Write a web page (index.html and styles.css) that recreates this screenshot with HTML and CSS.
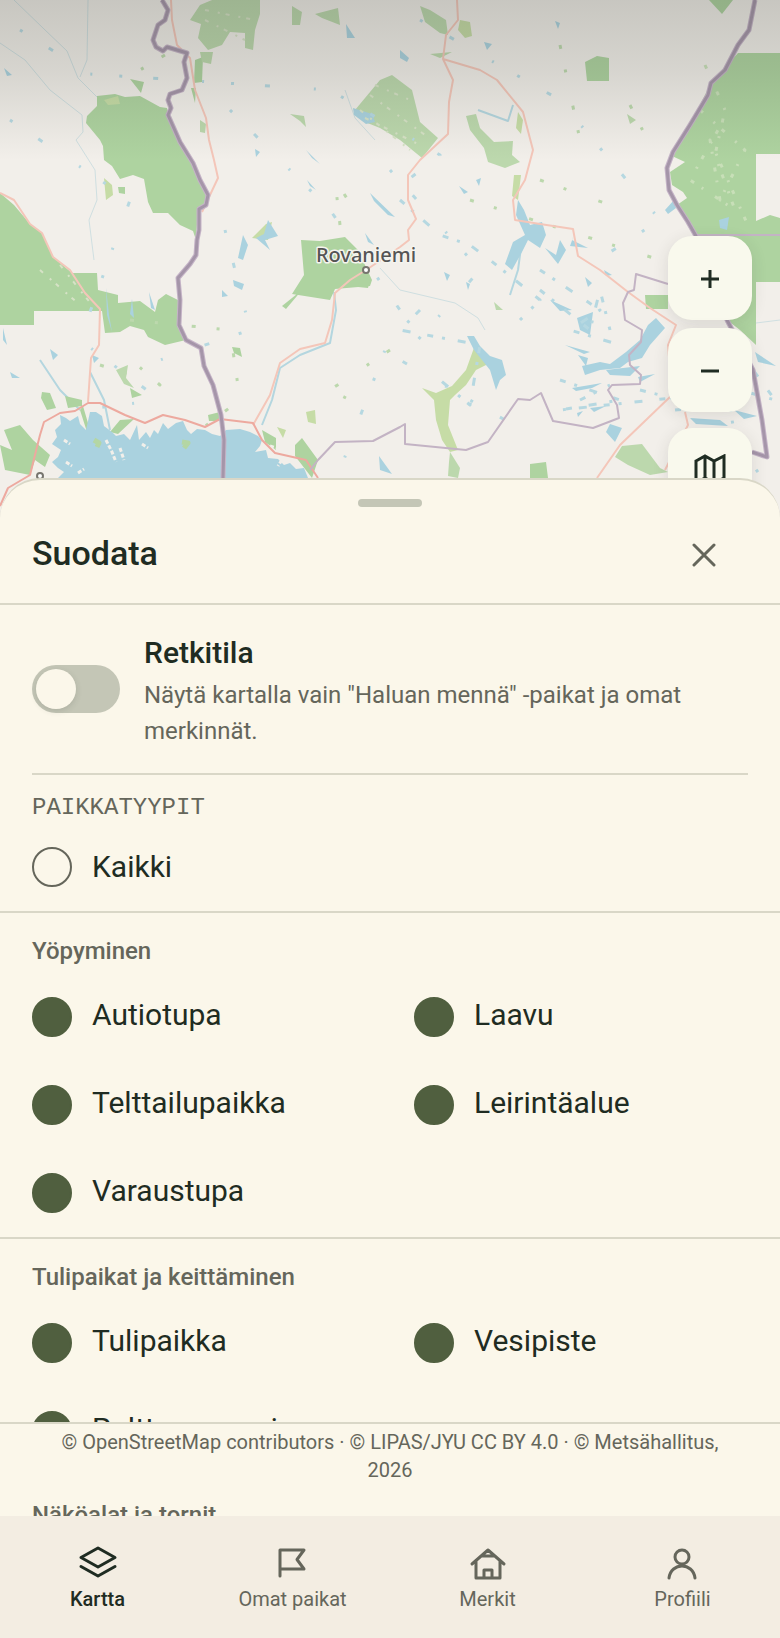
FILE: index.html
```html
<!DOCTYPE html>
<html lang="fi">
<head>
<meta charset="utf-8">
<meta name="viewport" content="width=device-width, initial-scale=1">
<title>Suodata</title>
<link rel="stylesheet" href="styles.css">
</head>
<body>
<div class="app">
  <div class="map">
    <svg class="map-art" viewBox="0 0 780 520" preserveAspectRatio="xMidYMin slice" role="img" aria-label="Kartta">
      <g class="stream">
        <path d="M14 0 44 29 67 51 78 78 98 98M88 0 87 60 80 77M0 43 25 60 50 90 82 115 83 132 76 140 95 170 97 200 89 220 94 260M345 90 355 118 375 140M380 268 400 290 455 303 478 318 485 330M780 320 740 325"/>
        <path d="M262 425 272 400 280 368 300 355 330 343 336 310 334 292M478 110 508 121 513 105M510 295 518 270 522 240M40 360 60 390 80 410M90 372 104 400 110 430" class="river"/>
      </g>
      <g class="wood">
        <path d="M97 96 115 94 125 97 140 96 160 107 167 108 169 118 180 142 193 163 200 180 208 197 207 203 198 209 196 240 193 231 180 225 168 213 153 213 148 202 144 179 133 175 120 179 112 166 104 160 103 146 100 140 86 123 87 116 97 106Z"/>
        <path d="M0 193 14 205 30 224 42 233 53 257 72 273 97 273 98 290 118 295 118 303 140 301 155 312 158 300 166 294 178 300 180 325 186 340 165 345 148 337 144 330 130 326 120 332 105 333 102 311 34 311 34 325 0 325Z"/>
        <path d="M738 53H780V154H756V221L770 215 780 218V282H756V345L740 330 727 320 696 240 677 205 687 198 683 192 672 185 670 172 685 162 672 156 690 125 711 83Z"/>
        <path d="M301 240 320 241 345 237 358 250 372 280 370 286 335 289 330 300 292 294 304 275ZM302 290 286 309 282 306ZM130 79 144 82 141 93ZM195 60 203 57 202 82 194 83ZM191 88 196 88 195 103ZM585 62 597 56 609 58V81H587ZM709 0H733L722 14Z"/>
        <path d="M42 392 50 393 56 408 47 410 41 398ZM65 396 82 400 82 406 68 408ZM83 406 90 430 87 432 80 410ZM110 432 120 420 134 419 118 434ZM130 388 142 395 132 398ZM4 430 20 425 33 440 50 455 45 467 35 460 30 475 5 470 0 445 12 450ZM262 430 276 438 276 450 265 442ZM295 445 302 438 318 460 312 478 295 456ZM232 347 240 348 242 357 234 353ZM208 415 220 412 220 421 209 421ZM530 464 546 462 548 478H530ZM361 276 370 280 368 288 358 287ZM645 295H668V309H646ZM118 187 125 187 125 194 119 193Z"/>
      </g>
      <g class="grove">
        <path d="M200 5 212 0 260 0 260 14 255 30 253 50 245 48 245 33 230 32 222 45 208 50 198 38 201 24 190 20ZM292 6 302 12 300 25 292 25ZM315 14 338 8 340 25 322 18ZM200 52 213 52 211 64 202 62ZM355 110 380 80 392 75 412 90 420 122 438 138 422 158 400 140 380 128 365 122ZM420 6 430 10 446 20 448 35 440 33 425 22ZM466 116 476 114 480 128 494 142 513 141 512 155 520 162 505 168 488 162 484 148 470 130ZM430 54 452 52 440 58ZM290 114 304 116 306 127 300 121ZM627 114 636 120 630 124Z"/>
        <path d="M622 446 642 444 660 468 668 472 650 475 628 465 615 457ZM450 452 460 468 458 478 448 476 449 462ZM200 120 206 124 205 133 200 132ZM116 370 128 365 126 378 134 388 124 384ZM494 302 503 310 496 310Z"/>
        <path class="meadow" d="M475 345 492 362 476 370 466 385 455 395 450 400 448 425 458 450 450 452 442 440 436 420 434 400 422 388 436 393 452 386 466 370ZM518 112 523 120 521 134 516 128ZM460 20 470 22 472 36 465 38 458 30ZM104 178 112 185 113 195 106 200ZM252 238 266 224 272 222 268 240ZM306 412 315 410 316 424 308 422ZM277 427 286 430 283 438ZM104 100 118 96 120 104 108 105ZM514 175 521 175 518 200 512 196Z"/>
      </g>
      <g class="water">
        <path d="M60 415 66 418 70 421 78 416 80 424 86 430 90 412 96 412 102 416 104 426 112 432 116 436 124 434 130 440 137 425 139 440 146 432 150 438 154 430 158 434 163 423 168 429 176 423 183 421 187 430 191 434 197 429 205 430 212 434 220 436 226 430 240 429 250 432 258 436 262 440 260 446 255 452 266 450 268 458 278 459 284 465 290 463 296 469 304 468 308 478H58L64 472 58 468 52 462 58 457 61 450 52 444 57 437 55 430 61 424Z"/>
        <path d="M518 200 524 210 530 225 542 222 546 235 540 248 528 240 522 252 512 270 505 264 513 242 525 235 516 215ZM545 248 556 255 560 240 566 250 558 264ZM575 232 572 240 588 248 570 246ZM467 336 474 336 480 346 490 356 502 360 506 375 500 380 496 390 490 370 474 350ZM582 366 600 362 610 364 626 352 640 340 648 325 656 318 665 328 650 345 642 358 628 362 620 368 600 370 585 375ZM578 355 588 358 586 366ZM610 424 622 428 615 442 606 432ZM606 370 640 366 630 376 610 375ZM572 388 602 383 592 388 576 391ZM353 108 372 114 375 122 366 124 354 115ZM243 235 248 245 243 260 238 258ZM256 238 264 234 268 220 278 236 265 240 270 250ZM346 24 355 38 347 38ZM4 68 12 75 7 76ZM400 50 409 58 407 62 400 58ZM484 42 492 44 487 50ZM555 21 560 23 558 29ZM255 149 260 152 256 157ZM459 186 468 192 464 194ZM476 180 481 178 479 186ZM665 210 674 200 676 208 668 214ZM692 462 730 470 700 455ZM379 456 392 474 380 470ZM690 418 720 420 728 426 696 424ZM719 220 729 217 727 230 720 228Z"/>
        <path d="M306 150 320 164 312 158ZM307 180 316 190 310 186ZM370 193 395 217 388 215 374 201ZM365 233 374 245 368 242ZM50 349 58 355 53 360ZM3 328 7 345 3 340ZM10 372 20 378 12 378ZM92 355 99 358 94 363ZM106 288 109 315 112 332 107 315ZM132 299 134 318 130 314ZM149 292 155 310 151 308ZM233 280 244 284 242 290 234 286ZM222 290 228 296 222 297ZM550 300 572 310 560 311ZM577 318 593 312 590 335 580 330ZM565 345 590 352 584 354ZM716 350 735 365 725 362ZM718 320 728 330ZM755 352 776 366 758 362ZM734 410 757 416 744 419ZM444 272 450 275 447 281ZM466 282 470 284 468 290ZM638 377 655 374 640 382ZM590 408 606 406 594 412ZM577 413 583 411 578 417ZM585 277 592 283 588 287ZM604 270 612 275 606 276Z"/>
      </g>
      <path class="isles" d="M106 440 112 452 116 462M120 448 124 460M78 473 84 469M142 444 148 448M64 440 70 444M285 455 278 466M270 446 276 448M66 462 72 466"/>
      <path class="isle-wood" d="M94 440 99 443 97 447M182 442 188 443 184 448"/>
      <g class="specks">
        <path d="M20 30 90 74 330 90 440 155 395 190M230 110 330 210 400 310 340 470M10 120 130 200 80 340 160 400 80 410M225 230 250 330 190 350 160 360M390 170 480 270 400 360 540 440M420 20 560 100 660 220 590 265"/>
        <path d="M400 200 440 235 470 245 490 260 540 300 520 320M540 270 600 310 570 330 620 345M560 380 620 400 560 410 700 395M735 345 775 400 740 390M675 410 730 405 735 440 760 475M420 310 400 330 480 345 470 405 440 380M540 290 590 330 600 290 610 330M580 400 610 385M640 390 680 400" class="dense"/>
        <path d="M700 110 745 150 720 200 710 140 750 230" class="pale"/>
        <path d="M705 65 725 110 715 155 735 210 690 180 718 130" class="pale"/>
        <path d="M360 110 410 150M370 95 425 135M375 85 410 100M205 10 255 20M205 20 245 40M40 270 80 305M60 265 92 305M365 118 420 145" class="light"/>
        <path d="M165 55 140 70M130 320 230 330 240 400 200 430M340 225 335 180 348 200M560 45 580 140M630 105 650 145M540 180 610 205M470 200 660 260M390 350 330 390 350 400M100 365 160 385 120 350" class="leaf"/>
      </g>
      <g class="road">
        <path d="M171 0 172 20 177 45 190 58 195 90 206 118 209 140 214 160 218 178 210 195 202 212M0 193 14 200 30 224 42 233 53 257 70 270 85 293 100 309 99 345 91 358 88 402M253 425 270 395 280 363 300 349 325 343 332 320 335 293 350 280 366 270 378 262 400 247 409 240 408 230 416 219 408 200 408 175 420 160 448 134 449 102 453 80 443 59 446 35 458 20 457 0M443 59 480 70 497 80 523 112 533 150 525 180 513 200 515 220 540 224 573 229 578 256 600 270 628 292 650 308 676 325 668 345 672 395 620 445 597 478M685 412 688 425 665 470"/>
        <path class="coast" d="M0 506 8 488 30 475 40 435 44 422 60 413 75 411 88 403 100 403 125 415 145 423 163 415 185 420 205 427 220 419 253 423 262 440 275 453 306 460 318 478"/>
      </g>
      <g class="region">
        <path d="M310 470 318 460 335 442 373 441 400 427 405 424 405 444 466 450 488 442 518 399 530 400 541 393 553 421 593 428 619 418 617 405 608 390 612 385 640 384 641 375 630 365 629 355 641 342 642 330 625 320 623 303 628 292 634 290 636 274 668 284M695 235H780"/>
      </g>
      <g class="frontier">
        <path id="frontier" d="M162 0 168 10 165 20 158 25 153 40 156 47 163 51 167 47 187 53 184 62 187 78 182 90 170 94 168 100 171 108 168 115 180 142 193 163 200 180 208 195 206 205 199 209 199 230 197 240 196 255 190 264 178 278 180 300 179 325 186 340 201 348 204 366 213 385 217 400 221 415 224 440 223 478M755 0 749 30 738 45 725 70 711 83 708 95 690 125 673 152 667 168 669 190 677 205 688 222 696 236 727 320 753 370 762 420 767 457 752 452"/>
        <use href="#frontier" class="frontier-core"/>
      </g>
      <circle class="town" cx="366" cy="270" r="3"/>
      <circle class="town" cx="40" cy="476" r="3"/>
      <text class="town-name" x="366" y="262" text-anchor="middle">Rovaniemi</text>
    </svg>
    <div class="map-tools">
      <div class="zoom-tools">
        <button class="tool" type="button" aria-label="Lähennä"><svg width="20" height="20" viewBox="0 0 20 20"><path d="M1 11H19M10 2V20"/></svg></button>
        <button class="tool" type="button" aria-label="Loitonna"><svg width="20" height="20" viewBox="0 0 20 20"><path d="M1 11H19"/></svg></button>
      </div>
      <button class="tool" type="button" aria-label="Karttapohja"><svg width="32" height="32" viewBox="0 0 32 32"><path d="M2 7 11 2 20 7 30 2V24L20 29 11 24 2 29ZM11 2V24M20 7V29"/></svg></button>
    </div>
  </div>

  <main class="sheet">
    <div class="handle"></div>
    <header class="sheet-head">
      <h1>Suodata</h1>
      <button class="close" type="button" aria-label="Sulje"><svg width="24" height="24" viewBox="0 0 24 24"><path d="M2 2 22 22M22 2 2 22"/></svg></button>
    </header>
    <div class="filters">
      <div class="intro">
        <div class="trip">
          <input class="switch" id="trip" type="checkbox" role="switch">
          <div class="trip-text">
            <label for="trip">Retkitila</label>
            <p>Näytä kartalla vain "Haluan mennä" -paikat ja omat merkinnät.</p>
          </div>
        </div>
        <h2 class="overline">PAIKKATYYPIT</h2>
        <label class="option"><input type="checkbox"><span>Kaikki</span></label>
      </div>
      <section class="group">
        <h3>Yöpyminen</h3>
        <div class="options">
          <label class="option"><input type="checkbox" checked><span>Autiotupa</span></label>
          <label class="option"><input type="checkbox" checked><span>Laavu</span></label>
          <label class="option"><input type="checkbox" checked><span>Telttailupaikka</span></label>
          <label class="option"><input type="checkbox" checked><span>Leirintäalue</span></label>
          <label class="option"><input type="checkbox" checked><span>Varaustupa</span></label>
        </div>
      </section>
      <section class="group">
        <h3>Tulipaikat ja keittäminen</h3>
        <div class="options">
          <label class="option"><input type="checkbox" checked><span>Tulipaikka</span></label>
          <label class="option"><input type="checkbox" checked><span>Vesipiste</span></label>
          <label class="option"><input type="checkbox" checked><span>Polttopuusuoja</span></label>
        </div>
      </section>
      <section class="group">
        <h3>Näköalat ja tornit</h3>
      </section>
    </div>
    <p class="credits">© OpenStreetMap contributors · © LIPAS/JYU CC BY 4.0 · © Metsähallitus, 2026</p>
  </main>

  <nav class="tabs">
    <a class="tab current" href="#kartta" aria-current="page">
      <svg width="40" height="40" viewBox="0 0 40 40"><path d="M20 6 37 15.500 20 25 3 15.500ZM3 24.500 20 34 37 24.500"/></svg>
      <span>Kartta</span>
    </a>
    <a class="tab" href="#paikat">
      <svg width="40" height="40" viewBox="0 0 40 40"><path d="M7 34V8H31L24 17.500 31 27H7"/></svg>
      <span>Omat paikat</span>
    </a>
    <a class="tab" href="#merkit">
      <svg width="40" height="40" viewBox="0 0 40 40"><path d="M4 22 20 8 36 22M8 19V36H32V19M16 36V28H24V36M14 14H26"/></svg>
      <span>Merkit</span>
    </a>
    <a class="tab" href="#profiili">
      <svg width="40" height="40" viewBox="0 0 40 40"><circle cx="19" cy="15" r="7"/><path d="M6 36C8 20 30 20 32 36"/></svg>
      <span>Profiili</span>
    </a>
  </nav>
</div>
</body>
</html>
```
FILE: styles.css
```css
:root {
  --paper: #fbf7ea;
  --ink: #1f2c22;
  --muted: #65665b;
  --line: #d9d7c7;
  --moss: #505f3f;
  --knob: #c4c6b6;
}
* { box-sizing: border-box; }
body {
  margin: 0;
  background: var(--paper);
  color: var(--ink);
  font-family: Roboto, "Noto Sans", sans-serif;
}
h1, h2, h3, p { margin: 0; }
button { border: 0; padding: 0; color: inherit; cursor: pointer; }
svg { display: block; }

.app { display: flex; flex-direction: column; height: 100vh; }

/* Map */
.map { position: relative; flex: none; height: 520px; overflow: hidden; background: #f2efea; }
.map::after {
  content: "";
  position: absolute;
  inset: 0 0 auto;
  height: 160px;
  background: linear-gradient(rgba(50, 55, 45, .22), rgba(50, 55, 45, .14) 45%, rgba(50, 55, 45, 0));
  pointer-events: none;
}
.map-art { width: 100%; height: 100%; stroke-linejoin: round; }
.wood { fill: #aed3a0; }
.grove { fill: #bcd8ad; }
.meadow { fill: #c6dca6; }
.water { fill: #aad2df; }
.stream { fill: none; stroke: #cfdfe1; stroke-width: 1; }
.river { stroke: #b4d6df; stroke-width: 2; }
.isles { fill: none; stroke: #f2efea; stroke-width: 3; stroke-dasharray: 4 2; }
.isle-wood { fill: none; stroke: #b4d6a4; stroke-width: 5; }
.specks { fill: none; stroke: #b6d8e1; stroke-width: 3; stroke-dasharray: 3 31 5 44 2 27; }
.dense { stroke-dasharray: 6 9 3 13 8 17; }
.light { stroke: #d6e2c6; stroke-width: 2; stroke-dasharray: 4 9 2 6; }
.pale { stroke: #c8dfb8; stroke-dasharray: 4 14 2 9; }
.leaf { stroke: #bcd8ad; stroke-dasharray: 4 21 3 34; }
.road { fill: none; stroke: #f4c6b9; stroke-width: 2; }
.coast { stroke: #eda99f; }
.region { fill: none; stroke: #c3b3c4; stroke-width: 2; }
.frontier { fill: none; stroke: #c5b4c7; stroke-width: 5; }
.frontier-core { stroke: #a595a9; stroke-width: 3; }
.town { fill: #fff; stroke: #77756f; stroke-width: 2; }
.town-name {
  font: 500 20px "Noto Sans", sans-serif;
  fill: #555;
  stroke: #f5f4ee;
  stroke-width: 3;
  paint-order: stroke;
}
.map-tools { position: absolute; top: 236px; right: 28px; display: grid; gap: 16px; }
.zoom-tools { display: grid; gap: 8px; }
.tool {
  display: grid;
  place-items: center;
  width: 84px;
  height: 84px;
  border-radius: 24px;
  background: #f9f9ed;
  box-shadow: 0 4px 16px rgba(50, 50, 40, .12);
}
.tool path { fill: none; stroke: var(--ink); stroke-width: 3; }

/* Filter sheet */
.sheet {
  position: relative;
  flex: 1;
  min-height: 0;
  display: flex;
  flex-direction: column;
  margin-top: -42px;
  border-top: 2px solid var(--line);
  border-radius: 40px 40px 0 0;
  background: var(--paper);
}
.handle { align-self: center; width: 64px; height: 8px; margin-top: 19px; border-radius: 4px; background: var(--knob); flex: none; }
.sheet-head {
  display: flex;
  flex: none;
  align-items: center;
  justify-content: space-between;
  height: 98px;
  padding: 0 32px;
  border-bottom: 2px solid var(--line);
}
.sheet-head h1 { padding-bottom: 4px; font-size: 34px; line-height: 48px; font-weight: 500; }
.close { display: grid; place-items: center; width: 88px; height: 88px; background: none; }
.close path { fill: none; stroke: var(--muted); stroke-width: 3; stroke-linecap: round; }
.filters { flex: 1; min-height: 0; overflow: hidden; }
.intro { padding: 0 32px; }
.trip { display: flex; align-items: center; gap: 24px; padding: 24px 0; border-bottom: 2px solid var(--line); }
.trip-text { flex: 1; }
.trip-text label { display: block; padding-top: 4px; margin-bottom: 4px; font-size: 30px; line-height: 40px; font-weight: 500; }
.trip-text p { font-size: 24px; line-height: 36px; color: var(--muted); }
.switch {
  appearance: none;
  flex: none;
  width: 88px;
  height: 48px;
  margin: 0;
  padding: 4px;
  border-radius: 24px;
  background: var(--knob);
}
.switch::before {
  content: "";
  display: block;
  width: 40px;
  height: 40px;
  border-radius: 50%;
  background: var(--paper);
  box-shadow: 0 2px 6px rgba(50, 55, 45, .15);
}
.switch:checked { background: var(--moss); }
.switch:checked::before { margin-left: auto; }
.overline {
  padding-top: 18px;
  font: 400 24px/30px "Liberation Mono", monospace;
  color: var(--muted);
}
.group { padding: 0 32px; border-top: 2px solid var(--line); }
.group h3 { padding: 20px 0 4px; font-size: 24px; line-height: 36px; font-weight: 500; color: var(--muted); }
.options { display: grid; grid-template-columns: 1fr 1fr; column-gap: 48px; }
.option { display: flex; align-items: center; gap: 20px; height: 88px; font-size: 30px; line-height: 40px; }
.options span { padding-bottom: 4px; }
.option input {
  appearance: none;
  flex: none;
  width: 40px;
  height: 40px;
  margin: 0;
  border: 2px solid var(--muted);
  border-radius: 50%;
}
.option input:checked { border-color: var(--moss); background: var(--moss); }

/* Map credits float over the bottom of the list */
.credits {
  position: absolute;
  inset: auto 0 32px;
  padding: 4px 48px 0;
  border-top: 2px solid var(--line);
  background: var(--paper);
  font-size: 20px;
  line-height: 28px;
  text-align: center;
  color: var(--muted);
}

/* Tab bar */
.tabs { display: grid; grid-template-columns: repeat(4, 1fr); flex: none; height: 122px; padding-top: 26px; background: #f3ede2; }
.tab {
  display: flex;
  flex-direction: column;
  align-items: center;
  gap: 3px;
  color: var(--muted);
  font-size: 20px;
  line-height: 28px;
  text-decoration: none;
}
.tab svg { fill: none; stroke: currentColor; stroke-width: 3; stroke-linejoin: round; stroke-linecap: round; }
.current { color: var(--ink); font-weight: 500; }
```
